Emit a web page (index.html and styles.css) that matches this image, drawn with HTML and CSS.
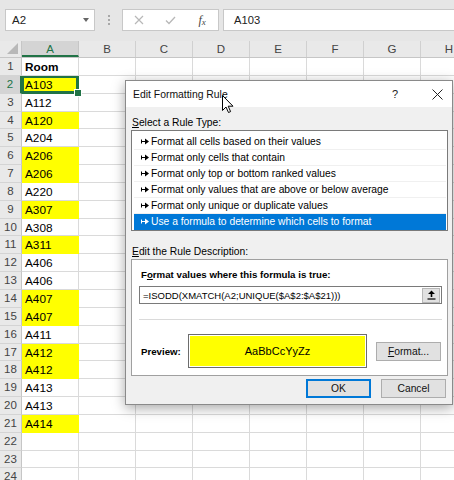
FILE: index.html
```html
<!DOCTYPE html>
<html lang="en">
<head>
    <meta charset="UTF-8">
    <meta name="viewport" content="width=device-width, initial-scale=1.0">
    <title>Edit Formatting Rule</title>
    <link rel="stylesheet" href="styles.css">
</head>
<body>
    <div class="app">
        <!-- name box + formula bar -->
        <div class="formula-bar">
            <div class="name-box"><span>A2</span><span class="drop"></span></div>
            <div class="grip"><i></i><i></i><i></i></div>
            <div class="fx-buttons">
                <span class="fx-slot">
                    <svg width="10" height="10" viewBox="0 0 10 10"><path d="M1 1L9 9M9 1L1 9" stroke="#b8b8b8" stroke-width="1.2" fill="none"/></svg>
                </span>
                <span class="fx-slot">
                    <svg width="11" height="9" viewBox="0 0 11 9"><path d="M1 4.5L4 7.5L10 1" stroke="#b8b8b8" stroke-width="1.3" fill="none"/></svg>
                </span>
                <span class="fx-slot fx">f<small>x</small></span>
            </div>
            <div class="formula-input">A103</div>
        </div>

        <!-- sheet -->
        <div class="sheet">
            <div class="col-heads">
                <div class="corner"></div>
                <div class="col-head sel">A</div>
                <div class="col-head">B</div>
                <div class="col-head">C</div>
                <div class="col-head">D</div>
                <div class="col-head">E</div>
                <div class="col-head">F</div>
                <div class="col-head">G</div>
                <div class="col-head">H</div>
            </div>
            <div class="row"><div class="row-head">1</div><div class="cell bold">Room</div><div class="rest"></div></div>
            <div class="row"><div class="row-head sel">2</div><div class="cell yellow active">A103</div><div class="rest"></div></div>
            <div class="row"><div class="row-head">3</div><div class="cell">A112</div><div class="rest"></div></div>
            <div class="row"><div class="row-head">4</div><div class="cell yellow">A120</div><div class="rest"></div></div>
            <div class="row"><div class="row-head">5</div><div class="cell">A204</div><div class="rest"></div></div>
            <div class="row"><div class="row-head">6</div><div class="cell yellow">A206</div><div class="rest"></div></div>
            <div class="row"><div class="row-head">7</div><div class="cell yellow">A206</div><div class="rest"></div></div>
            <div class="row"><div class="row-head">8</div><div class="cell">A220</div><div class="rest"></div></div>
            <div class="row"><div class="row-head">9</div><div class="cell yellow">A307</div><div class="rest"></div></div>
            <div class="row"><div class="row-head">10</div><div class="cell">A308</div><div class="rest"></div></div>
            <div class="row"><div class="row-head">11</div><div class="cell yellow">A311</div><div class="rest"></div></div>
            <div class="row"><div class="row-head">12</div><div class="cell">A406</div><div class="rest"></div></div>
            <div class="row"><div class="row-head">13</div><div class="cell">A406</div><div class="rest"></div></div>
            <div class="row"><div class="row-head">14</div><div class="cell yellow">A407</div><div class="rest"></div></div>
            <div class="row"><div class="row-head">15</div><div class="cell yellow">A407</div><div class="rest"></div></div>
            <div class="row"><div class="row-head">16</div><div class="cell">A411</div><div class="rest"></div></div>
            <div class="row"><div class="row-head">17</div><div class="cell yellow">A412</div><div class="rest"></div></div>
            <div class="row"><div class="row-head">18</div><div class="cell yellow">A412</div><div class="rest"></div></div>
            <div class="row"><div class="row-head">19</div><div class="cell">A413</div><div class="rest"></div></div>
            <div class="row"><div class="row-head">20</div><div class="cell">A413</div><div class="rest"></div></div>
            <div class="row"><div class="row-head">21</div><div class="cell yellow">A414</div><div class="rest"></div></div>
            <div class="row"><div class="row-head">22</div><div class="cell"></div><div class="rest"></div></div>
            <div class="row"><div class="row-head">23</div><div class="cell"></div><div class="rest"></div></div>
            <div class="row"><div class="row-head">24</div><div class="cell"></div><div class="rest"></div></div>
        </div>

        <!-- dialog -->
        <div class="dialog">
            <div class="dlg-title">
                <span class="dlg-caption">Edit Formatting Rule</span>
                <span class="dlg-help">?</span>
                <span class="dlg-close">
                    <svg width="11" height="11" viewBox="0 0 11 11"><path d="M0.5 0.5L10.5 10.5M10.5 0.5L0.5 10.5" stroke="#222" stroke-width="1" fill="none"/></svg>
                </span>
            </div>
            <div class="dlg-body">
                <div class="dlg-label"><u>S</u>elect a Rule Type:</div>
                <ul class="rule-list">
                    <li><svg class="arrow" width="8" height="7" viewBox="0 0 8 7"><path d="M0 1.5h1v4H0z M1 3h3v1H1z M4 0.5L8 3.5L4 6.5z"/></svg>Format all cells based on their values</li>
                    <li><svg class="arrow" width="8" height="7" viewBox="0 0 8 7"><path d="M0 1.5h1v4H0z M1 3h3v1H1z M4 0.5L8 3.5L4 6.5z"/></svg>Format only cells that contain</li>
                    <li><svg class="arrow" width="8" height="7" viewBox="0 0 8 7"><path d="M0 1.5h1v4H0z M1 3h3v1H1z M4 0.5L8 3.5L4 6.5z"/></svg>Format only top or bottom ranked values</li>
                    <li><svg class="arrow" width="8" height="7" viewBox="0 0 8 7"><path d="M0 1.5h1v4H0z M1 3h3v1H1z M4 0.5L8 3.5L4 6.5z"/></svg>Format only values that are above or below average</li>
                    <li><svg class="arrow" width="8" height="7" viewBox="0 0 8 7"><path d="M0 1.5h1v4H0z M1 3h3v1H1z M4 0.5L8 3.5L4 6.5z"/></svg>Format only unique or duplicate values</li>
                    <li class="selected"><svg class="arrow" width="8" height="7" viewBox="0 0 8 7"><path d="M0 1.5h1v4H0z M1 3h3v1H1z M4 0.5L8 3.5L4 6.5z"/></svg>Use a formula to determine which cells to format</li>
                </ul>

                <div class="dlg-label gap"><u>E</u>dit the Rule Description:</div>
                <div class="desc-box">
                    <div class="desc-label">F<u>o</u>rmat values where this formula is true:</div>
                    <div class="formula-field">
                        <span>=ISODD(XMATCH(A2;UNIQUE($A$2:$A$21)))</span>
                        <span class="collapse">
                            <svg width="9" height="10" viewBox="0 0 9 10"><path d="M4.5 0.5L8 4H5.3V7H3.7V4H1z" fill="#000"/><path d="M0.5 9h8" stroke="#000" stroke-width="1.2"/></svg>
                        </span>
                    </div>
                    <div class="separator"></div>
                    <div class="preview-row">
                        <div class="preview-label">Preview:</div>
                        <div class="preview-box">AaBbCcYyZz</div>
                        <div class="btn fmt"><u>F</u>ormat...</div>
                    </div>
                </div>

                <div class="dlg-buttons">
                    <div class="btn ok">OK</div>
                    <div class="btn">Cancel</div>
                </div>
            </div>
        </div>

        <svg class="cursor" width="12" height="19" viewBox="0 0 12 19">
            <path d="M0.5 0.5V15.5L4 12L6.5 17.5L8.6 16.6L6.2 11.2H11Z" fill="#fff" stroke="#000" stroke-width="1" stroke-linejoin="round"/>
        </svg>
    </div>
</body>
</html>
```

FILE: styles.css
```css
* {
    margin: 0;
    padding: 0;
    box-sizing: border-box;
}
body {
    width: 454px;
    height: 480px;
    overflow: hidden;
    background: #fff;
    font-family: "Liberation Sans", Arial, sans-serif;
    color: #000;
}
.app {
    position: relative;
    width: 454px;
    height: 480px;
    overflow: hidden;
}

/* formula bar */
.formula-bar {
    height: 41px;
    background: #e6e6e6;
    display: flex;
    align-items: flex-start;
    padding-top: 9px;
}
.name-box {
    margin-left: 5px;
    width: 90px;
    height: 22px;
    background: #fff;
    border: 1px solid #c8c8c8;
    display: flex;
    align-items: center;
    justify-content: space-between;
    padding: 0 5px 0 6px;
    font-size: 11.5px;
    color: #222;
}
.drop {
    width: 0;
    height: 0;
    border-left: 3.5px solid transparent;
    border-right: 3.5px solid transparent;
    border-top: 4px solid #666;
}
.grip {
    width: 27px;
    height: 22px;
    display: flex;
    flex-direction: column;
    align-items: center;
    justify-content: center;
    gap: 2px;
}
.grip i {
    width: 2px;
    height: 2px;
    background: #a8a8a8;
}
.fx-buttons {
    width: 97px;
    height: 22px;
    background: #fff;
    border: 1px solid #c8c8c8;
    display: flex;
    align-items: center;
}
.fx-slot {
    width: 32px;
    height: 20px;
    display: flex;
    align-items: center;
    justify-content: center;
}
.fx {
    font-family: "Liberation Serif", serif;
    font-style: italic;
    font-size: 12px;
    color: #444;
}
.fx small {
    font-size: 9px;
    margin-top: 3px;
}
.formula-input {
    margin-left: 4px;
    flex: 1;
    height: 22px;
    background: #fff;
    border: 1px solid #c8c8c8;
    border-right: none;
    padding-left: 10px;
    line-height: 20px;
    font-size: 11.2px;
    color: #222;
}

/* sheet */
.col-heads {
    display: flex;
    height: 17px;
    background: #e9e9e9;
    border-bottom: 1px solid #c6c6c6;
}
.corner {
    width: 22px;
    flex: none;
    border-right: 1px solid #c6c6c6;
    position: relative;
}
.corner::after {
    content: "";
    position: absolute;
    right: 3px;
    bottom: 3px;
    border-left: 11px solid transparent;
    border-bottom: 11px solid #b8b8b8;
}
.col-head {
    width: 57px;
    flex: none;
    border-right: 1px solid #d0d0d0;
    text-align: center;
    font-size: 11.5px;
    line-height: 16px;
    color: #444;
}
.col-head.sel {
    background: #d4d4d4;
    color: #217346;
    border-bottom: 2px solid #217346;
    border-right-color: #c6c6c6;
}
.row {
    display: flex;
    height: 17.85px;
}
.row-head {
    width: 22px;
    flex: none;
    background: #e9e9e9;
    border-right: 1px solid #c6c6c6;
    border-bottom: 1px solid #d4d4d4;
    text-align: center;
    font-size: 11.5px;
    line-height: 17px;
    color: #444;
}
.row-head.sel {
    background: #d4d4d4;
    color: #217346;
    border-right: 2px solid #217346;
}
.cell {
    width: 57px;
    flex: none;
    border-right: 1px solid #dadada;
    border-bottom: 1px solid #dadada;
    padding-left: 3px;
    font-size: 11.8px;
    line-height: 18px;
    white-space: nowrap;
}
.cell.bold {
    font-weight: bold;
}
.cell.yellow {
    background: #ffff00;
    border-right-color: #ffff00;
    border-bottom-color: #ffff00;
}
.cell.active {
    position: relative;
    box-shadow: inset 0 0 0 2px #217346;
    border-right-color: #217346;
    border-bottom-color: #217346;
}
.cell.active::after {
    content: "";
    position: absolute;
    right: -4px;
    bottom: -4px;
    width: 6px;
    height: 6px;
    background: #217346;
    border: 1px solid #fff;
    z-index: 2;
}
.rest {
    flex: 1;
    border-bottom: 1px solid #dadada;
    background: repeating-linear-gradient(to right, transparent 0 56px, #dadada 56px 57px);
}

/* dialog */
.dialog {
    position: absolute;
    left: 125px;
    top: 80px;
    width: 328px;
    height: 325px;
    background: #f0f0f0;
    border: 1px solid #8a8a8a;
    box-shadow: 0 3px 12px rgba(0, 0, 0, 0.35);
    font-size: 10.3px;
}
.dlg-title {
    height: 26px;
    background: #fff;
    display: flex;
    align-items: center;
    padding: 0 5px 0 7px;
}
.dlg-caption {
    flex: 1;
    font-size: 10.4px;
    color: #111;
}
.dlg-help {
    width: 20px;
    text-align: center;
    font-size: 11px;
    color: #222;
    margin-right: 22px;
}
.dlg-close {
    width: 20px;
    display: flex;
    justify-content: center;
}
.dlg-body {
    padding: 8px 4px 0 5px;
}
.dlg-label {
    line-height: 15px;
    padding-left: 1px;
}
.dlg-label.gap {
    margin-top: 13px;
}
.rule-list {
    list-style: none;
    height: 101px;
    background: #fff;
    border: 1px solid #7a7a7a;
    padding: 3px 1px 0 2px;
}
.rule-list li {
    height: 16px;
    line-height: 15px;
    border-bottom: 1px solid #f0f0f0;
    padding-left: 7px;
    display: flex;
    align-items: center;
    white-space: nowrap;
}
.arrow {
    fill: currentColor;
    margin-right: 2px;
    flex: none;
}
.rule-list li.selected {
    background: #0078d7;
    color: #fff;
    border-bottom-color: #0078d7;
}
.desc-box {
    height: 117px;
    background: #fff;
    border: 1px solid #a0a0a0;
    padding: 7px 5px 0 7px;
}
.desc-label {
    font-weight: bold;
    font-size: 9.7px;
    line-height: 15px;
    padding-left: 2px;
}
.formula-field {
    margin-top: 4px;
    height: 18px;
    border: 1px solid #7a7a7a;
    background: #fff;
    display: flex;
    align-items: center;
    padding-left: 3px;
    font-size: 9.5px;
    white-space: nowrap;
}
.collapse {
    margin-left: auto;
    margin-right: 1px;
    width: 18px;
    height: 15px;
    background: #e1e1e1;
    border: 1px solid #b8b8b8;
    display: flex;
    align-items: center;
    justify-content: center;
}
.separator {
    margin-top: 15px;
    height: 2px;
    border-top: 1px solid #dadada;
    border-bottom: 1px solid #fff;
}
.preview-row {
    margin-top: 13px;
    display: flex;
    align-items: center;
}
.preview-label {
    width: 49px;
    padding-left: 2px;
    font-weight: bold;
    font-size: 9.7px;
}
.preview-box {
    width: 179px;
    height: 34px;
    background: #ffff00;
    border: 1px solid #6d6d6d;
    box-shadow: inset 0 0 0 1px #fff;
    display: flex;
    align-items: center;
    justify-content: center;
    font-size: 11px;
}
.btn {
    width: 65px;
    height: 19px;
    background: #e1e1e1;
    border: 1px solid #adadad;
    display: flex;
    align-items: center;
    justify-content: center;
    color: #111;
}
.btn.fmt {
    margin-left: 9px;
}
.dlg-buttons {
    margin-top: 3px;
    padding-right: 2px;
    display: flex;
    justify-content: flex-end;
    gap: 10px;
}
.btn.ok {
    border: 2px solid #0078d7;
}

.cursor {
    position: absolute;
    left: 222px;
    top: 95px;
}
```
